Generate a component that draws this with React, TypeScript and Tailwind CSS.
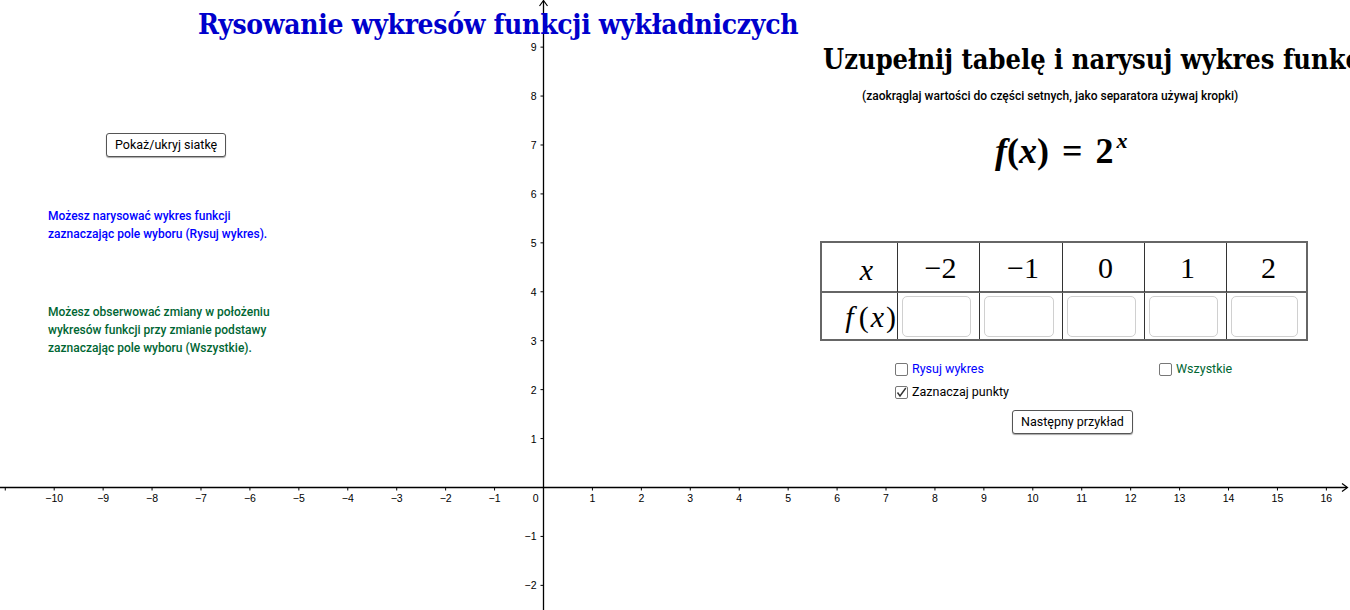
import React from 'react';

// axis geometry (px) taken from the applet view
const OX = 543.5;
const OY = 487.5;
const UNIT = 48.93;

const xs = Array.from({ length: 28 }, (_, i) => i - 11).filter((n) => n !== 0);
const ys = [-2, -1, 1, 2, 3, 4, 5, 6, 7, 8, 9];

const fmt = (n: number) => (n < 0 ? `\u2212${-n}` : `${n}`);

const SLAB = '"DejaVu Serif Condensed", "DejaVu Serif", serif';
const MATH = '"Liberation Serif", "Times New Roman", serif';

function Axes() {
    return (
        <svg className="absolute inset-0" width={1350} height={610} style={{ fontFamily: '"Liberation Sans", Arial, sans-serif' }}>
            <line x1={0} y1={OY} x2={1347} y2={OY} stroke="#000" strokeWidth={1.3} />
            <path d={`M1342 ${OY - 4} L1347.5 ${OY} L1342 ${OY + 4}`} fill="none" stroke="#000" strokeWidth={1.2} />
            <line x1={OX} y1={1} x2={OX} y2={610} stroke="#000" strokeWidth={1.3} />
            <path d={`M${OX - 4} 6 L${OX} 0.5 L${OX + 4} 6`} fill="none" stroke="#000" strokeWidth={1.2} />
            {xs.map((n) => {
                const x = OX + n * UNIT;
                return (
                    <g key={`x${n}`}>
                        <line x1={x} y1={OY} x2={x} y2={OY + 3} stroke="#000" strokeWidth={1} />
                        {n >= -10 && (
                            <text x={x} y={OY + 14} fontSize={10.5} textAnchor="middle" fill="#000">
                                {fmt(n)}
                            </text>
                        )}
                    </g>
                );
            })}
            <text x={OX - 5} y={OY + 14} fontSize={10.5} textAnchor="end" fill="#000">0</text>
            {ys.map((n) => {
                const y = OY - n * UNIT;
                return (
                    <g key={`y${n}`}>
                        <line x1={OX - 3} y1={y} x2={OX} y2={y} stroke="#000" strokeWidth={1} />
                        <text x={OX - 7} y={y + 4} fontSize={10.5} textAnchor="end" fill="#000">
                            {fmt(n)}
                        </text>
                    </g>
                );
            })}
        </svg>
    );
}

function GgbButton({ label, className = '' }: { label: string; className?: string }) {
    return (
        <button
            className={`h-[24px] px-[8px] rounded-[3px] border border-[#555] bg-white text-[12.5px] leading-none text-black shadow-[0_1px_1px_rgba(0,0,0,0.35)] ${className}`}
        >
            {label}
        </button>
    );
}

function Check({ checked, label, color }: { checked?: boolean; label: string; color: string }) {
    return (
        <div className="flex items-center gap-[4px] h-[13px]">
            <span className="w-[13px] h-[13px] rounded-[2px] border border-[#777] bg-white flex items-center justify-center">
                {checked && (
                    <svg width="11" height="11" viewBox="0 0 11 11">
                        <path d="M1.5 5.5 L4 9 L9.8 1" fill="none" stroke="#333" strokeWidth={1.4} />
                    </svg>
                )}
            </span>
            <span className={`text-[12.5px] leading-none ${color}`}>{label}</span>
        </div>
    );
}

const header = ['\u22122', '\u22121', '0', '1', '2'];
const cols = 'grid grid-cols-[75px_82px_83px_82px_82px_1fr]';

function ValueTable() {
    return (
        <div className="w-[488px] border-2 border-[#666] bg-white" style={{ fontFamily: MATH }}>
            <div className={`${cols} h-[50px] border-b-2 border-[#666]`}>
                <div className="flex items-center justify-center pl-[14px] pt-[4px] text-[30px] italic">x</div>
                {header.map((h) => (
                    <div key={h} className="border-l border-[#333] flex items-center justify-center pl-[4px] text-[30px]">
                        {h}
                    </div>
                ))}
            </div>
            <div className={`${cols} h-[46px]`}>
                <div className="flex items-center justify-end pr-[1px] text-[30px]">
                    <i className="mr-[5px]">f</i>(<i className="mx-[2px]">x</i>)
                </div>
                {header.map((h) => (
                    <div key={h} className="border-l border-[#333] pl-[4px] pr-[8px] pt-[3px] pb-[2px]">
                        <div className="w-full h-full rounded-[5px] border border-[#d0d0d0] bg-white" />
                    </div>
                ))}
            </div>
        </div>
    );
}

export default function App() {
    return (
        <div className="relative w-[1350px] h-[610px] overflow-hidden bg-white text-black" style={{ fontFamily: 'Roboto, "Noto Sans", sans-serif' }}>
            <Axes />

            <h1 className="absolute left-[198px] top-[11px] whitespace-nowrap text-[28px] leading-none font-bold text-[#0000cc] tracking-[-0.3px]" style={{ fontFamily: SLAB }}>
                Rysowanie wykresów funkcji wykładniczych
            </h1>

            {/* left column: grid toggle and hints */}
            <div className="absolute left-[48px] top-[133px] flex flex-col items-start">
                <GgbButton label="Pokaż/ukryj siatkę" className="ml-[58px]" />
                <div className="mt-[50px] text-[12px] leading-[18px] font-medium text-[#0000ff]">
                    <p>Możesz narysować wykres funkcji</p>
                    <p>zaznaczając pole wyboru (Rysuj wykres).</p>
                </div>
                <div className="mt-[60px] text-[12px] leading-[18px] font-medium text-[#006633]">
                    <p>Możesz obserwować zmiany w położeniu</p>
                    <p>wykresów funkcji przy zmianie podstawy</p>
                    <p>zaznaczając pole wyboru (Wszystkie).</p>
                </div>
            </div>

            {/* right column: exercise */}
            <div className="absolute left-[820px] top-[46px] w-[530px] flex flex-col items-start">
                <h2 className="ml-[3px] h-[27px] whitespace-nowrap text-[27px] leading-none font-bold" style={{ fontFamily: SLAB }}>
                    Uzupełnij tabelę i narysuj wykres funkcji
                </h2>
                <p className="ml-[42px] mt-[17px] h-[12px] whitespace-nowrap text-[12px] leading-none font-medium">
                    (zaokrąglaj wartości do części setnych, jako separatora używaj kropki)
                </p>
                <div className="ml-[175px] mt-[26px] h-[46px] flex items-center whitespace-nowrap text-[36px] leading-none font-bold" style={{ fontFamily: MATH }}>
                    <span>
                        <i>f</i>(<i>x</i>)
                    </span>
                    <span className="mx-[13px]">=</span>
                    <span>
                        2<sup className="italic text-[22px] -top-[15px] ml-[3px]">x</sup>
                    </span>
                </div>
                <div className="mt-[67px]">
                    <ValueTable />
                </div>
                <div className="ml-[75px] mt-[22px] grid grid-cols-[264px_auto] gap-y-[10px]">
                    <Check label="Rysuj wykres" color="text-[#0000ff]" />
                    <Check label="Wszystkie" color="text-[#006633]" />
                    <Check checked label="Zaznaczaj punkty" color="text-black" />
                </div>
                <GgbButton label="Następny przykład" className="ml-[192px] mt-[11px]" />
            </div>
        </div>
    );
}
